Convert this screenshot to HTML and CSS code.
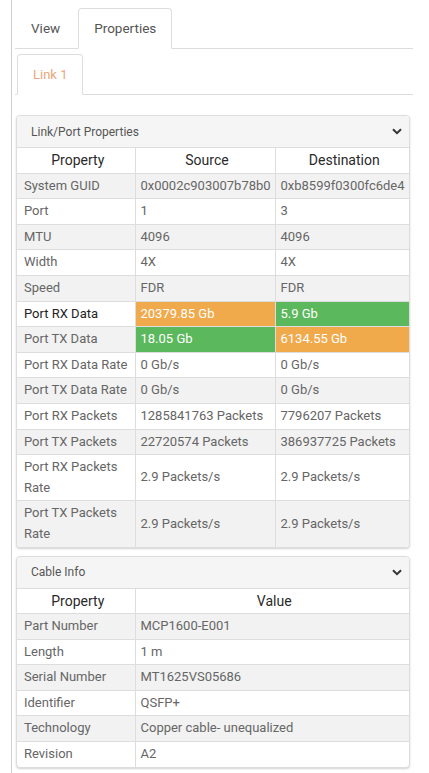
FILE: index.html
```html
<!DOCTYPE html>
<html lang="en">
<head>
<meta charset="utf-8">
<title>Link Properties</title>
<link rel="stylesheet" href="styles.css">
</head>
<body>
<div class="sidebar">
  <ul class="tabs">
    <li class="tab">View</li>
    <li class="tab active">Properties</li>
  </ul>
  <ul class="tabs subtabs">
    <li class="tab active link">Link 1</li>
  </ul>

  <div class="panel">
    <div class="panel-heading">
      <span class="panel-title">Link/Port Properties</span>
      <svg class="chevron" width="10" height="7" viewBox="0 0 10 7"><path d="M1 1.2 L5 5.2 L9 1.2" fill="none" stroke="#333" stroke-width="2"/></svg>
    </div>
    <table class="grid">
      <colgroup><col class="c-prop"><col class="c-src"><col></colgroup>
      <thead>
        <tr><th>Property</th><th>Source</th><th>Destination</th></tr>
      </thead>
      <tbody>
        <tr><td>System GUID</td><td>0x0002c903007b78b0</td><td>0xb8599f0300fc6de4</td></tr>
        <tr><td>Port</td><td>1</td><td>3</td></tr>
        <tr><td>MTU</td><td>4096</td><td>4096</td></tr>
        <tr><td>Width</td><td>4X</td><td>4X</td></tr>
        <tr><td>Speed</td><td>FDR</td><td>FDR</td></tr>
        <tr><td class="strong">Port RX Data</td><td class="warn">20379.85 Gb</td><td class="ok">5.9 Gb</td></tr>
        <tr><td>Port TX Data</td><td class="ok">18.05 Gb</td><td class="warn">6134.55 Gb</td></tr>
        <tr><td>Port RX Data Rate</td><td>0 Gb/s</td><td>0 Gb/s</td></tr>
        <tr><td>Port TX Data Rate</td><td>0 Gb/s</td><td>0 Gb/s</td></tr>
        <tr><td>Port RX Packets</td><td>1285841763 Packets</td><td>7796207 Packets</td></tr>
        <tr><td>Port TX Packets</td><td>22720574 Packets</td><td>386937725 Packets</td></tr>
        <tr><td>Port RX Packets Rate</td><td>2.9 Packets/s</td><td>2.9 Packets/s</td></tr>
        <tr><td>Port TX Packets Rate</td><td>2.9 Packets/s</td><td>2.9 Packets/s</td></tr>
      </tbody>
    </table>
  </div>

  <div class="panel">
    <div class="panel-heading">
      <span class="panel-title">Cable Info</span>
      <svg class="chevron" width="10" height="7" viewBox="0 0 10 7"><path d="M1 1.2 L5 5.2 L9 1.2" fill="none" stroke="#333" stroke-width="2"/></svg>
    </div>
    <table class="grid">
      <colgroup><col class="c-prop"><col></colgroup>
      <thead>
        <tr><th>Property</th><th>Value</th></tr>
      </thead>
      <tbody>
        <tr><td>Part Number</td><td>MCP1600-E001</td></tr>
        <tr><td>Length</td><td>1 m</td></tr>
        <tr><td>Serial Number</td><td>MT1625VS05686</td></tr>
        <tr><td>Identifier</td><td>QSFP+</td></tr>
        <tr><td>Technology</td><td>Copper cable- unequalized</td></tr>
        <tr><td>Revision</td><td>A2</td></tr>
      </tbody>
    </table>
  </div>
</div>
</body>
</html>
```

FILE: styles.css
```css
html, body {
  margin: 0;
  background: #fff;
}

body {
  font-family: Roboto, "Noto Sans", sans-serif;
  font-size: 13px;
  color: #666;
}

.sidebar {
  margin-left: 11px;
  border-left: 1px solid #cfcfcf;
  padding: 8px 16px 8px 3px;
  min-height: 757px;
}

/* tab strips */
.tabs {
  list-style: none;
  margin: 0;
  padding: 0;
  display: flex;
  border-bottom: 1px solid #ddd;
}

.subtabs {
  margin-top: 5px;
  padding-left: 2px;
}

.tab {
  height: 39px;
  line-height: 39px;
  padding: 0 15px;
  margin-right: 2px;
  margin-bottom: -1px;
  border: 1px solid transparent;
  border-radius: 4px 4px 0 0;
  color: #555;
  font-size: 13.5px;
}

.tab.active {
  border-color: #ddd;
  border-bottom-color: #fff;
  background: #fff;
}

.tab.link {
  color: #eaa57a;
  font-size: 13px;
}

/* collapsible panels */
.panel {
  margin: 20px 3px 0 1px;
  border: 1px solid #ddd;
  border-radius: 4px;
  background: #fff;
  box-shadow: 0 1px 2px rgba(0, 0, 0, 0.18);
  overflow: hidden;
}

.panel + .panel {
  margin-top: 8px;
}

.panel-heading {
  height: 31px;
  display: flex;
  align-items: center;
  justify-content: space-between;
  padding: 0 7px 0 14px;
  background: #f5f5f5;
  border-bottom: 1px solid #ddd;
}

.panel-title {
  font-size: 12px;
  color: #555;
}

.chevron {
  display: block;
}

/* property tables */
.grid {
  width: 100%;
  border-collapse: collapse;
  table-layout: fixed;
}

.c-prop { width: 118px; }
.c-src { width: 140px; }

.grid th,
.grid td {
  border: 1px solid #ddd;
  padding: 2px 3px 2px 7px;
  line-height: 20.6px;
  text-align: left;
  vertical-align: middle;
}

.grid td + td {
  padding-left: 5px;
}

.grid tr > :first-child { border-left: 0; }
.grid tr > :last-child { border-right: 0; }
.grid thead tr th { border-top: 0; }
.grid tbody tr:last-child td { border-bottom: 0; }

.grid th {
  text-align: center;
  font-weight: 400;
  font-size: 14px;
  color: #2a2a2a;
}

.grid tbody tr:nth-child(odd) td {
  background: #f2f2f2;
}

.grid td.strong {
  color: #222;
}

.grid tbody tr td.warn {
  background: #f0aa4c;
  color: #fff;
}

.grid tbody tr td.ok {
  background: #5cb85c;
  color: #fff;
}
```
